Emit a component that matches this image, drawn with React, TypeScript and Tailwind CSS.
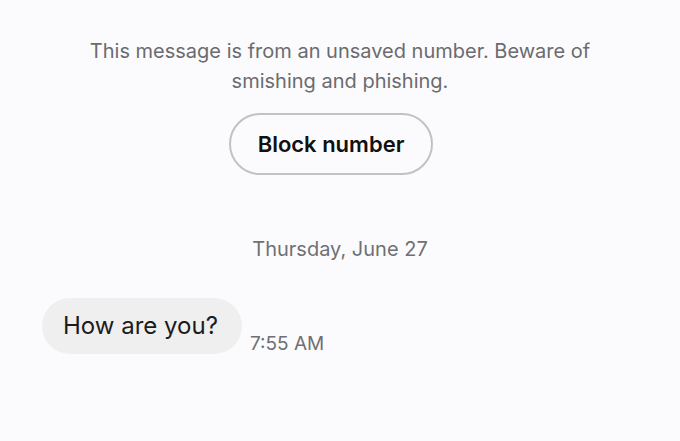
export default function App() {
  return (
    <div
      className="w-[680px] h-[441px] bg-[#fbfbfd] overflow-hidden flex flex-col items-center"
      style={{ fontFamily: "Inter, 'Noto Sans', sans-serif" }}
    >
      <p className="mt-[36px] w-[560px] text-center text-[20px] leading-[30px] text-[#6b6b6e]">
        This message is from an unsaved number. Beware of smishing and phishing.
      </p>
      <button className="mt-[17px] mr-[18px] h-[62px] w-[204px] rounded-full border-2 border-[#c2c2c4] text-[22px] font-semibold text-[#111]">
        Block number
      </button>
      <p className="mt-[60px] text-[20px] leading-[28px] text-[#707073]">Thursday, June 27</p>
      <div className="mt-[35px] self-stretch flex items-end gap-[8px] pl-[42px]">
        <div className="h-[56px] pl-[21px] pr-[24px] rounded-full bg-[#efefef] flex items-center text-[24px] text-[#1c1c1c]">
          How are you?
        </div>
        <span className="mb-[-2px] text-[19px] leading-[24px] text-[#6f6f72]">7:55 AM</span>
      </div>
    </div>
  );
}
